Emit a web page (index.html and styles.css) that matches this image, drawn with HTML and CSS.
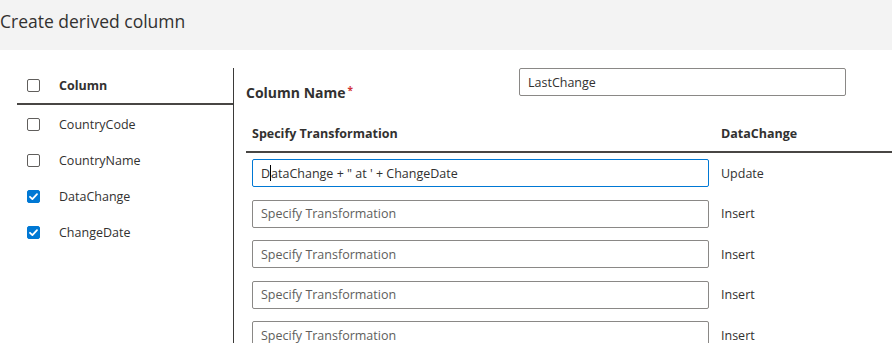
FILE: index.html
```html
<!DOCTYPE html>
<html lang="en">
<head>
    <meta charset="UTF-8">
    <title>Create derived column</title>
    <link rel="stylesheet" href="styles.css">
</head>
<body>
    <div class="header">
        <h1 class="title">Create derived column</h1>
    </div>

    <div class="content">
        <div class="columns">
            <div class="col-head">
                <span class="check"></span>
                <span>Column</span>
            </div>
            <div class="col-row"><span class="check"></span><span>CountryCode</span></div>
            <div class="col-row"><span class="check"></span><span>CountryName</span></div>
            <div class="col-row">
                <span class="check checked"><svg viewBox="0 0 13 13" width="13" height="13"><path d="M3 6.8 L5.4 9.1 L10 4.2" fill="none" stroke="#fff" stroke-width="1.8" stroke-linecap="round" stroke-linejoin="round"/></svg></span>
                <span>DataChange</span>
            </div>
            <div class="col-row">
                <span class="check checked"><svg viewBox="0 0 13 13" width="13" height="13"><path d="M3 6.8 L5.4 9.1 L10 4.2" fill="none" stroke="#fff" stroke-width="1.8" stroke-linecap="round" stroke-linejoin="round"/></svg></span>
                <span>ChangeDate</span>
            </div>
        </div>

        <div class="editor">
            <div class="name-row">
                <label class="name-label">Column Name<span class="req">*</span></label>
                <div class="field">LastChange</div>
            </div>

            <div class="grid-head">
                <span>Specify Transformation</span>
                <span>DataChange</span>
            </div>

            <div class="grid-row">
                <div class="field focused">D<span class="caret"></span>ataChange + " at ' + ChangeDate</div>
                <span class="op">Update</span>
            </div>
            <div class="grid-row">
                <div class="field placeholder">Specify Transformation</div>
                <span class="op">Insert</span>
            </div>
            <div class="grid-row">
                <div class="field placeholder">Specify Transformation</div>
                <span class="op">Insert</span>
            </div>
            <div class="grid-row">
                <div class="field placeholder">Specify Transformation</div>
                <span class="op">Insert</span>
            </div>
            <div class="grid-row">
                <div class="field placeholder">Specify Transformation</div>
                <span class="op">Insert</span>
            </div>
        </div>
    </div>
</body>
</html>
```

FILE: styles.css
```css
body {
    margin: 0;
    font-family: 'Open Sans', 'Noto Sans', sans-serif;
    color: #323130;
    background-color: white;
    overflow: hidden;
}

.header {
    height: 50px;
    background-color: #f3f3f3;
    display: flex;
    align-items: center;
}

.title {
    margin: 0 0 8px 0;
    font-size: 17.5px;
    font-weight: 400;
    color: #323130;
}

.content {
    display: flex;
    padding-left: 17px;
    margin-top: 18px;
    font-size: 12.5px;
}

.columns {
    width: 216px;
    border-right: 1px solid #3b3a39;
    height: 300px;
}

.col-head {
    display: flex;
    align-items: center;
    height: 35px;
    border-bottom: 2px solid #484644;
    font-weight: 700;
    padding-left: 10px;
}

.col-head + .col-row {
    margin-top: 1px;
}

.col-row {
    display: flex;
    align-items: center;
    height: 36px;
    padding-left: 10px;
}

.check {
    width: 13px;
    height: 13px;
    box-sizing: border-box;
    border: 1px solid #605e5c;
    border-radius: 2px;
    margin-right: 19px;
    flex-shrink: 0;
    display: inline-flex;
}

.check.checked {
    background-color: #0078d4;
    border-color: #0078d4;
}

.check svg {
    margin: -1px;
}

.editor {
    flex: 1;
    padding-left: 12px;
}

.name-row {
    display: grid;
    grid-template-columns: 273px 327px;
}

.name-label {
    font-size: 14px;
    font-weight: 700;
    padding-top: 15px;
}

.req {
    color: #d13438;
    font-size: 10px;
    margin-left: 2px;
    vertical-align: 4px;
}

.field {
    height: 28px;
    box-sizing: border-box;
    border: 1px solid #8a8886;
    border-radius: 2px;
    padding: 0 8px;
    display: flex;
    align-items: center;
    white-space: pre;
}

.field.placeholder {
    color: #605e5c;
}

.field.focused {
    border-color: #0078d4;
}

.caret {
    display: inline-block;
    width: 1px;
    height: 16px;
    background-color: #000;
}

.grid-head {
    display: grid;
    grid-template-columns: 457px 1fr;
    column-gap: 12px;
    margin-top: 14px;
    padding-left: 6px;
    border-bottom: 2px solid #484644;
    font-weight: 700;
    height: 35px;
    align-items: center;
}

.grid-head + .grid-row {
    margin-top: 6px;
}

.grid-row {
    display: grid;
    grid-template-columns: 457px 1fr;
    column-gap: 12px;
    padding-left: 6px;
    align-items: center;
    margin-top: 12.6px;
}
```
